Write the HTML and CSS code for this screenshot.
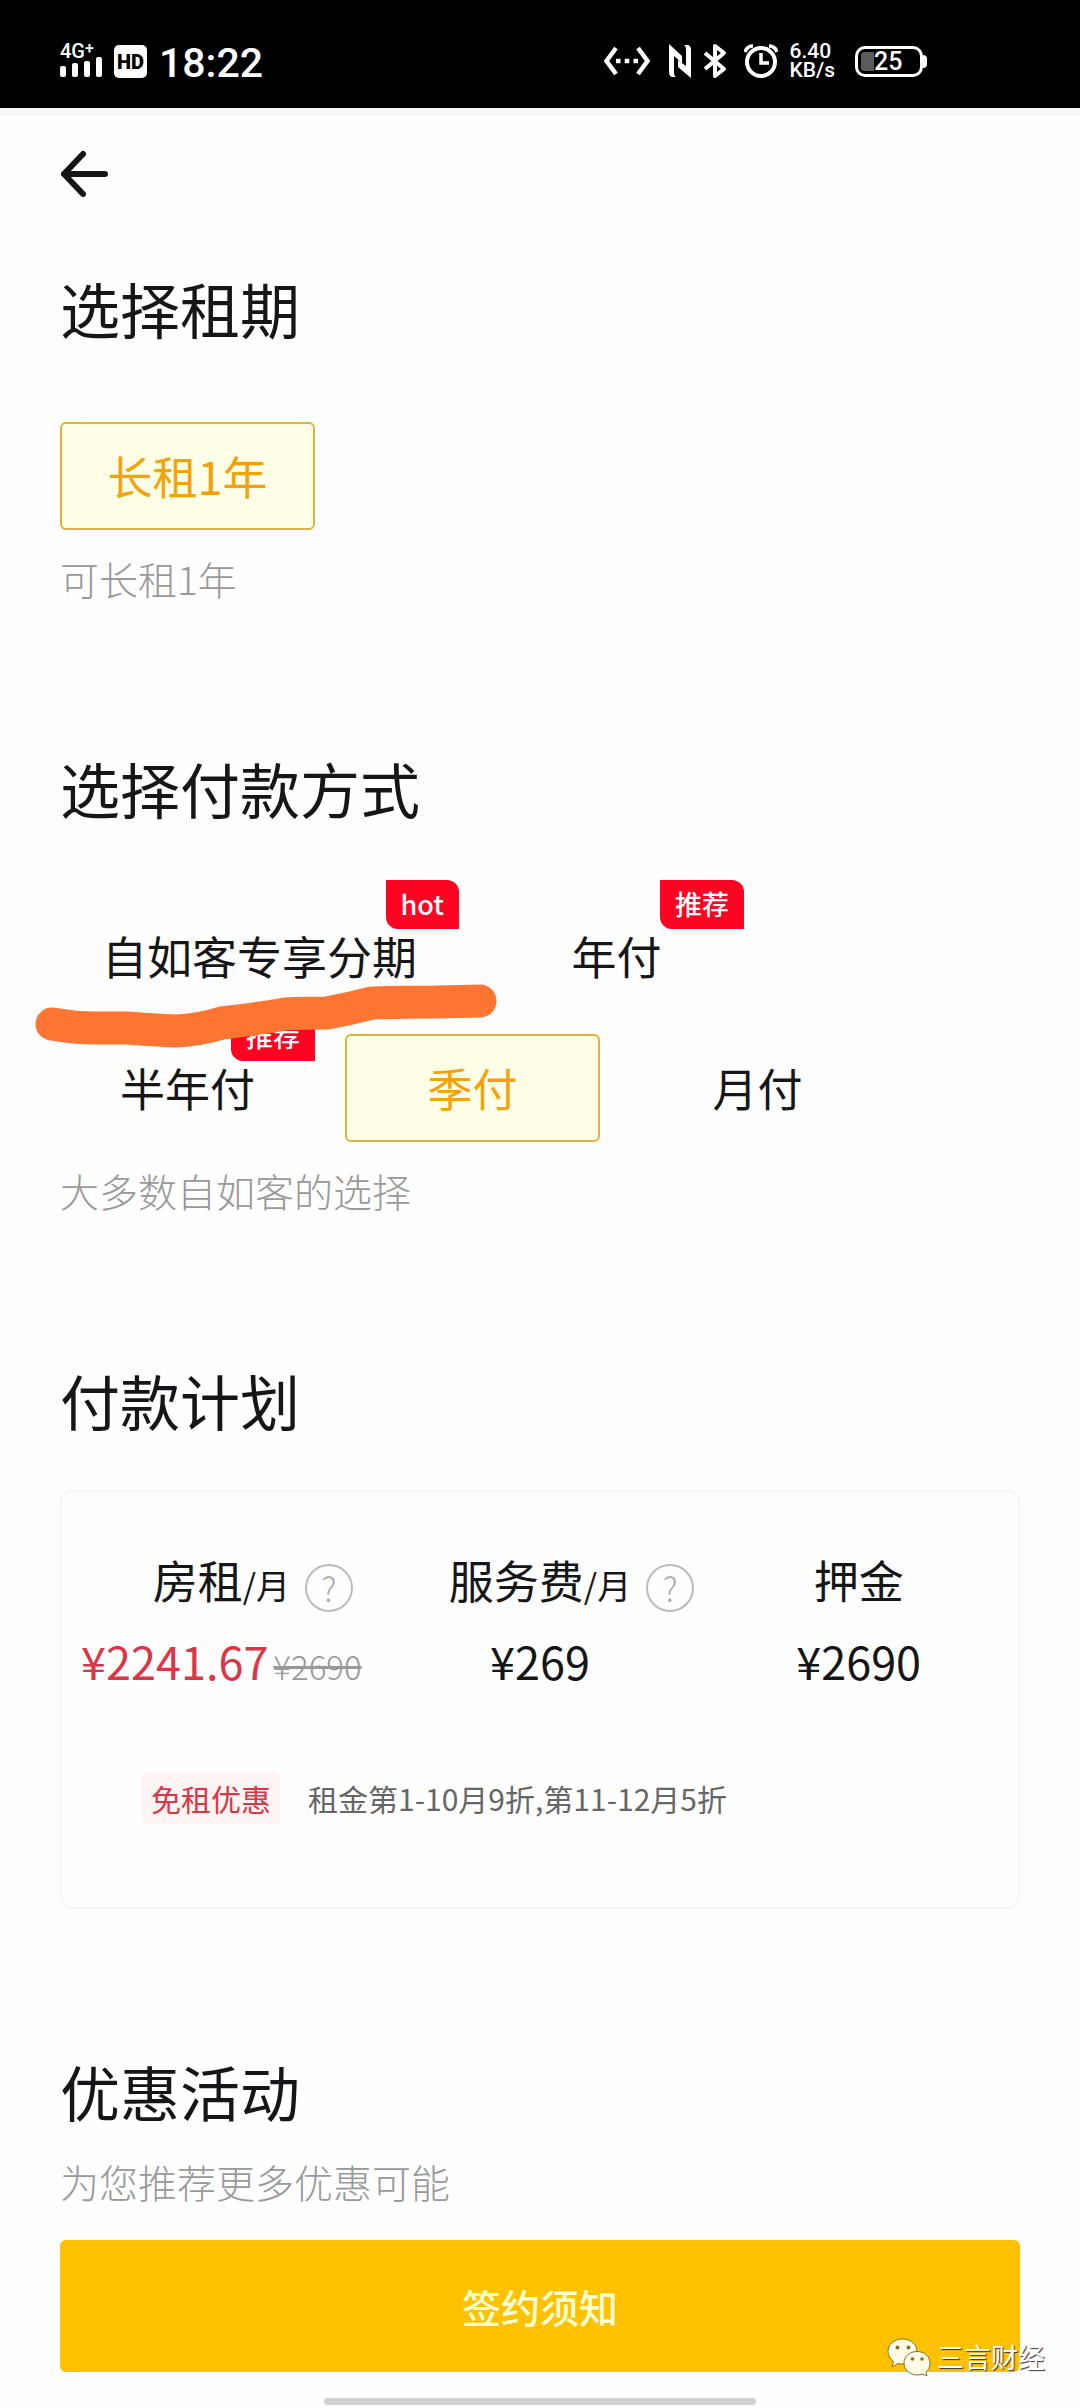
FILE: index.html
```html
<!DOCTYPE html>
<html lang="zh-CN">
<head>
<meta charset="utf-8">
<meta name="viewport" content="width=device-width, initial-scale=1">
<title>签约</title>
<link rel="stylesheet" href="styles.css">
</head>
<body>
<div class="status">
  <div class="signal">
    <span class="signal-type">4G<sup class="signal-plus">+</sup></span>
    <svg width="42" height="20" viewBox="0 0 42 20" fill="#fff" aria-hidden="true"><rect y="9" width="6" height="11" rx="2"/><rect x="12" y="6" width="6" height="14" rx="2"/><rect x="24" y="4" width="6" height="16" rx="2"/><rect x="36" width="6" height="20" rx="2"/></svg>
  </div>
  <span class="hd">HD</span>
  <span class="clock">18:22</span>
  <div class="status-icons">
    <svg class="icon-net" width="48" height="34" viewBox="0 0 48 34" fill="none" stroke="#fff" stroke-width="4.500" aria-hidden="true"><path d="M13 4 3.500 17 13 30M35 4l9.500 13L35 30"/><path d="M13 17h22" stroke-dasharray="4.500 4.250"/></svg>
    <svg class="icon-nfc" width="22" height="34" viewBox="0 0 22 34" fill="#fff" aria-hidden="true"><path d="M0 0 13 12v7L5 12v16q0 4 2 5H4q-4 0-4-5zM22 34 9 23v-7l8 6V6q0-4-2-5h3q4 0 4 5z"/></svg>
    <svg class="icon-bt" width="24" height="36" viewBox="0 0 24 36" fill="none" stroke="#fff" stroke-width="4" stroke-linejoin="round" aria-hidden="true"><path d="M2 10 21 26 12 33V3l9 7L2 26"/></svg>
    <svg class="icon-alarm" width="34" height="34" viewBox="0 0 34 34" fill="none" stroke="#fff" aria-hidden="true"><circle cx="17" cy="18" r="14" stroke-width="4"/><path d="M17 9v10h8" stroke-width="3.500"/><path d="M1 8Q3 2 9 2M33 8Q31 2 25 2" stroke-width="3.500"/></svg>
    <span class="speed"><span>6.40</span><span>KB/s</span></span>
    <div class="battery"><span class="battery-level">25</span></div>
  </div>
</div>

<header class="topbar">
  <button class="back" type="button" aria-label="返回">
    <svg width="48" height="48" viewBox="0 0 48 48" fill="none" stroke="#161618" stroke-width="6" stroke-linecap="round" stroke-linejoin="round" aria-hidden="true"><path d="M23 4 4 24l19 20M4 24h41"/></svg>
  </button>
</header>

<main class="content">
  <section class="section">
    <h2 class="title">选择租期</h2>
    <div class="options">
      <button class="option selected" type="button" aria-pressed="true">长租1年</button>
    </div>
    <p class="hint">可长租1年</p>
  </section>

  <section class="section">
    <h2 class="title">选择付款方式</h2>
    <div class="options">
      <button class="option" type="button">自如客专享分期<span class="badge">hot</span></button>
      <button class="option" type="button">年付<span class="badge">推荐</span></button>
      <button class="option" type="button">半年付<span class="badge">推荐</span></button>
      <button class="option selected" type="button" aria-pressed="true">季付</button>
      <button class="option" type="button">月付</button>
      <svg class="marker" width="464" height="70" viewBox="0 0 464 70" fill="none" stroke="#ff7531" stroke-width="33" stroke-linecap="round" stroke-linejoin="round" aria-hidden="true"><path d="M18 40Q40 44 62 44L93 44Q120 46 142 47Q165 46 188 39Q222 35 252 30Q270 29 293 29Q315 25 338 19Q370 18 403 18L446 17"/></svg>
    </div>
    <p class="hint">大多数自如客的选择</p>
  </section>

  <section class="section">
    <h2 class="title plan-title">付款计划</h2>
    <div class="card">
      <dl class="fees">
        <div class="fee">
          <dt class="fee-name"><span>房租<small class="unit">/月</small></span><button class="help" type="button" aria-label="房租说明">?</button></dt>
          <dd class="price"><span class="sale">¥2241.67</span><del class="was">¥2690</del></dd>
        </div>
        <div class="fee">
          <dt class="fee-name"><span>服务费<small class="unit">/月</small></span><button class="help" type="button" aria-label="服务费说明">?</button></dt>
          <dd class="price">¥269</dd>
        </div>
        <div class="fee">
          <dt class="fee-name">押金</dt>
          <dd class="price">¥2690</dd>
        </div>
      </dl>
      <p class="discount"><span class="tag">免租优惠</span><span>租金第1-10月9折,第11-12月5折</span></p>
    </div>
  </section>

  <section class="section">
    <h2 class="title offers-title">优惠活动</h2>
    <p class="hint">为您推荐更多优惠可能</p>
  </section>
</main>

<footer class="footer">
  <button class="submit" type="button">签约须知</button>
  <div class="home-bar"></div>
  <div class="watermark">
    <svg width="44" height="38" viewBox="0 0 44 38" aria-hidden="true">
      <g fill="#fffbe6" stroke="#8a7020" stroke-width="1"><path d="M15.500 1C7 1 1 6.500 1 13.500c0 4 2 7.500 5.500 10L5 29l6-3.500c8 2 19-2 19-12C30 6.500 24 1 15.500 1z"/><path d="M30 13.500c-7.500 0-13 5-13 11.500s5.500 12 13 12c2 0 4-.3 5.500-1l4.500 2-1-4c2.500-2 4-5 4-9 0-6.500-5.500-11.500-13-11.500z"/></g>
      <g fill="#8a7020"><circle cx="10.500" cy="9.500" r="2"/><circle cx="21.500" cy="9.500" r="2"/><circle cx="25.500" cy="21" r="1.800"/><circle cx="35" cy="21" r="1.800"/></g>
    </svg>
    <span>三言财经</span>
  </div>
</footer>
</body>
</html>
```
FILE: styles.css
```css
* { box-sizing: border-box; }

body {
  margin: 0;
  min-height: 100vh;
  display: flex;
  flex-direction: column;
  background: #fefefe;
  color: #161618;
  font-family: "Noto Sans CJK SC", "Noto Sans", sans-serif;
}

button {
  margin: 0;
  padding: 0;
  border: 0;
  background: none;
  color: inherit;
  font: inherit;
}

svg { display: block; }

/* Phone status bar */
.status {
  display: flex;
  align-items: center;
  height: 108px;
  padding: 14px 157px 0 60px;
  background: #000;
  color: #fff;
  font-family: Roboto, sans-serif;
  font-weight: 500;
}

.signal { margin-bottom: 4px; }

.signal-type {
  display: block;
  height: 16px;
  font-size: 20px;
  line-height: 16px;
}

.signal-plus {
  font-size: 16px;
  line-height: 1;
  vertical-align: 4px;
}

.hd {
  width: 33px;
  height: 33px;
  margin-left: 12px;
  border-radius: 5px;
  background: #fff;
  color: #000;
  font-size: 20px;
  font-weight: 900;
  line-height: 34px;
  text-align: center;
}

.clock {
  margin: 4px 0 0 12px;
  font-size: 41px;
  line-height: 48px;
}

.status-icons {
  display: flex;
  align-items: center;
  margin-left: auto;
}

.icon-nfc { margin-left: 18px; }
.icon-bt { margin-left: 12px; }
.icon-alarm { margin-left: 17px; }

.speed {
  display: flex;
  flex-direction: column;
  margin-left: 11px;
  font-size: 21px;
  line-height: 19px;
}

.battery {
  position: relative;
  width: 68px;
  height: 31px;
  margin-left: 20px;
  padding: 3px;
  border: 3px solid #fff;
  border-radius: 10px;
}

.battery::before {
  content: "";
  display: block;
  width: 13px;
  height: 100%;
  border-radius: 4px 0 0 4px;
  background: #5c5c5c;
}

.battery::after {
  content: "";
  position: absolute;
  top: 6px;
  right: -7px;
  width: 4px;
  height: 13px;
  border-radius: 0 4px 4px 0;
  background: #fff;
}

.battery-level {
  position: absolute;
  inset: 0;
  padding-left: 16px;
  font-size: 25px;
  line-height: 26px;
}

/* Page header */
.topbar {
  height: 158px;
  padding: 34px 60px 0;
  border-top: 8px solid #f8f8f8;
}

.back {
  width: 48px;
  height: 48px;
}

/* Sections */
.content { padding: 0 60px; }

.section + .section { margin-top: 140px; }

.title {
  margin: 0 0 72px;
  font-size: 60px;
  font-weight: 400;
  line-height: 84px;
}

.plan-title { margin-bottom: 48px; }
.offers-title { margin-bottom: 20px; }

.options {
  position: relative;
  display: flex;
  flex-wrap: wrap;
  gap: 24px 30px;
}

.option {
  position: relative;
  min-width: 255px;
  height: 108px;
  padding: 0 40px;
  border: 2px solid transparent;
  border-radius: 6px;
  font-size: 45px;
  line-height: 64px;
}

.option.selected {
  border-color: #e2b03c;
  background: #ffffe8;
  color: #f5a20a;
}

.badge {
  position: absolute;
  top: -24px;
  right: -2px;
  height: 49px;
  padding: 0 15px;
  border-radius: 0 12px;
  background: #ff0322;
  color: #fff;
  font-size: 27px;
  font-weight: 500;
  line-height: 48px;
}

.marker {
  position: absolute;
  top: 82px;
  left: -26px;
}

.hint {
  margin: 0;
  color: #999;
  font-size: 39px;
  font-weight: 300;
  line-height: 56px;
}

.options + .hint { margin-top: 20px; }

/* Payment plan */
.card {
  padding: 56px 0 83px;
  border: 2px solid #f6f6f6;
  border-radius: 12px;
}

.fees {
  display: grid;
  grid-template-columns: repeat(3, 1fr);
  margin: 0;
}

.fee-name {
  display: flex;
  justify-content: center;
  align-items: flex-end;
  height: 64px;
  font-size: 45px;
  line-height: 64px;
}

.unit {
  font-size: 34px;
  line-height: 1;
}

/* The negative right margin keeps the name itself centred in its column */
.help {
  width: 48px;
  height: 48px;
  margin: 0 -63px 0 15px;
  border: 2px solid #bbb;
  border-radius: 50%;
  color: #aaa;
  font-size: 33px;
  font-weight: 300;
  line-height: 42px;
}

.price {
  display: flex;
  justify-content: center;
  align-items: baseline;
  height: 64px;
  margin: 17px 0 0;
  font-size: 45px;
  line-height: 64px;
}

.sale { color: #dc3545; }

.was {
  margin-left: 5px;
  color: #999;
  font-size: 33px;
  font-weight: 300;
  line-height: 1;
}

.discount {
  display: flex;
  align-items: center;
  gap: 28px;
  margin: 79px 0 0;
  padding-left: 80px;
  color: #666;
  font-size: 30px;
  line-height: 52px;
}

.tag {
  padding: 0 9px;
  border-radius: 6px;
  background: #fff4f4;
  color: #dc3545;
}

/* Bottom action */
.footer {
  position: relative;
  display: flex;
  flex-direction: column;
  align-items: center;
  margin-top: auto;
  padding: 30px 60px 3px;
}

.submit {
  width: 100%;
  height: 132px;
  border-radius: 6px;
  background: #ffc100;
  color: #ffffd2;
  font-size: 39px;
  font-weight: 500;
}

.home-bar {
  width: 45%;
  height: 7px;
  margin-top: 26px;
  border-radius: 4px;
  background: #d0d0d0;
}

.watermark {
  position: absolute;
  right: 35px;
  bottom: 32px;
  display: flex;
  align-items: center;
  gap: 6px;
  color: #fff;
  font-size: 27px;
  line-height: 38px;
  text-shadow: 1px 1px 1px #333;
}
```
